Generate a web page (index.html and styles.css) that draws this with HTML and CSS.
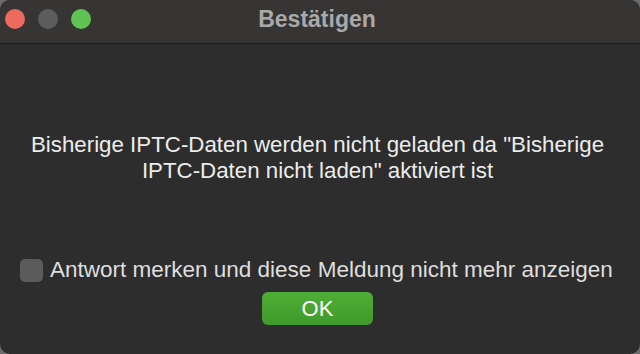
FILE: index.html
```html
<!DOCTYPE html>
<html lang="de">
<head>
<meta charset="utf-8"/>
<meta content="width=device-width, initial-scale=1" name="viewport"/>
<title>Bestätigen</title>
<link rel="stylesheet" href="styles.css">
</head>
<body>
<div class="window">
  <div class="titlebar">
    <div class="lights">
      <span class="light red"></span>
      <span class="light gray"></span>
      <span class="light green"></span>
    </div>
    <div class="title">Bestätigen</div>
  </div>
  <div class="content">
    <div class="message">Bisherige IPTC-Daten werden nicht geladen da "Bisherige<br>IPTC-Daten nicht laden" aktiviert ist</div>
    <label class="remember"><span class="box"></span>Antwort merken und diese Meldung nicht mehr anzeigen</label>
    <button class="ok-btn">OK</button>
  </div>
</div>
</body>
</html>
```

FILE: styles.css
```css
html, body {
  margin: 0;
  padding: 0;
  background: #6b6b6b;
}
body {
  font-family: "Liberation Sans", Arial, sans-serif;
  width: 640px;
  height: 354px;
  overflow: hidden;
}
.window {
  width: 640px;
  height: 354px;
  background: #2d2d2d;
  border-radius: 10px;
  overflow: hidden;
  display: flex;
  flex-direction: column;
}
.titlebar {
  height: 43px;
  background: #363533;
  border-bottom: 1px solid #1c1c1c;
  position: relative;
  display: flex;
  align-items: center;
  justify-content: center;
}
.lights {
  position: absolute;
  left: 5px;
  top: 9px;
  display: flex;
  gap: 13px;
}
.light {
  width: 20px;
  height: 20px;
  border-radius: 50%;
}
.light.red { background: #ec6a5e; }
.light.gray { background: #5c5c5c; }
.light.green { background: #5ec454; }
.title {
  color: #a9a9a9;
  font-weight: bold;
  font-size: 23px;
  margin-left: -6px;
  margin-top: -5px;
}
.content {
  flex: 1;
  display: flex;
  flex-direction: column;
  align-items: center;
}
.message {
  color: #ececec;
  font-size: 22.3px;
  line-height: 26px;
  text-align: center;
  margin-top: 88px;
  margin-left: -5px;
}
.remember {
  align-self: flex-start;
  display: flex;
  align-items: center;
  color: #dedede;
  font-size: 22.5px;
  line-height: 26px;
  margin: 73px 0 0 20px;
}
.box {
  width: 23px;
  height: 23px;
  border-radius: 5px;
  background: #5b5b5b;
  margin-right: 7px;
}
.ok-btn {
  margin-top: 9px;
  width: 111px;
  height: 33px;
  border: none;
  border-radius: 6px;
  background: linear-gradient(to bottom, #4fae36, #3f9a2a);
  color: #ffffff;
  font-family: "Liberation Sans", Arial, sans-serif;
  font-size: 22px;
  padding: 0;
  margin-left: -5px;
}
```
